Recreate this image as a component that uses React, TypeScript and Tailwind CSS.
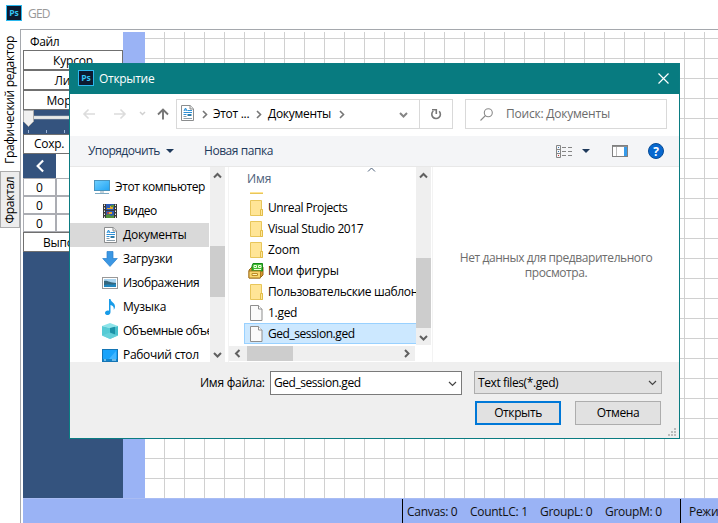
import React from 'react';

type P = { className?: string };

const Ps = ({ className = '' }: P) => (
  <svg viewBox="0 0 16 16" className={`h-4 w-4 shrink-0 ${className}`}>
    <rect x="0.5" y="0.5" width="15" height="15" fill="#0d1a30" stroke="#2bb8ee" />
    <text x="8" y="11" textAnchor="middle" fontSize="8.5" fontWeight="700" fill="#35c4f5" fontFamily="Open Sans, sans-serif">Ps</text>
  </svg>
);

const Chevron = ({ className = '', dir, w = 2 }: P & { dir: 'up' | 'down' | 'left' | 'right'; w?: number }) => {
  const d = { up: 'M1 6.5 4.5 3 8 6.5', down: 'M1 3 4.5 6.5 8 3', left: 'M6.5 1 3 4.5 6.5 8', right: 'M3 1 6.5 4.5 3 8' }[dir];
  return (
    <svg viewBox="0 0 9 9" className={`shrink-0 ${className.includes('h-[') ? '' : 'h-[9px] w-[9px]'} ${className}`} fill="none" stroke="currentColor" strokeWidth={w}>
      <path d={d} />
    </svg>
  );
};

const DocIcon = ({ className = '' }: P) => (
  <svg viewBox="0 0 13 16" className={`h-4 w-[13px] shrink-0 ${className}`}>
    <path d="M.5.5h8.700l3.300 3.300v11.700H.5z" fill="#fff" stroke="#8b8d8e" />
    <path d="M9 .5V4h3.500" fill="#e8e8e8" stroke="#8b8d8e" />
    <path d="m3 6 1.500-3L6 6M3.500 5h2M6.500 5.500H11M2.500 7.500H11M2.500 9.500h3" stroke="#2b8fd6" fill="none" />
    <path d="M6.500 9h4v2h-4z" fill="#2b79a8" />
    <path d="M2.500 11.500h3M2.500 13.500H11" stroke="#8a9ca8" />
  </svg>
);

const PcIcon = () => (
  <svg viewBox="0 0 16 16" className="h-4 w-4 shrink-0">
    <defs><linearGradient id="pc" x2="1" y2="1"><stop stopColor="#6fd0ff" /><stop offset="1" stopColor="#22a4f4" /></linearGradient></defs>
    <rect x=".5" y="1.500" width="15" height="10" fill="url(#pc)" stroke="#4a94bd" />
    <path d="M6 12h4v2H6z" fill="#c5d3db" />
    <path d="M1 14.500h14" stroke="#7eaac3" />
  </svg>
);

const VideoIcon = () => (
  <svg viewBox="0 0 14 16" className="h-4 w-[14px] shrink-0">
    <path d="M0 1h14v14H0z" fill="#393939" />
    <path d="M1.500 1.500v14M12.500 1.500v14" stroke="#eee" strokeDasharray="1.500 1.500" />
    <path d="M3 1h8v6H3zM3 8h8v7H3z" fill="#2c5ab4" />
    <path d="M4 5h3V3h3v3H4zM6 9h3v2H6z" fill="#e4a62b" />
    <path d="M8 2h3v2H8zM3 12l3-1 2 2 3-1v3H3z" fill="#54913b" />
    <path d="M4 9h2v2H4z" fill="#a94457" />
  </svg>
);

const DownIcon = () => (
  <svg viewBox="0 0 16 16" className="h-4 w-4 shrink-0">
    <path d="M5 .5h6v7h4.300L8 15.500.7 7.500H5z" fill="#3b97e3" stroke="#2880cc" strokeWidth=".7" />
  </svg>
);

const ImageIcon = () => (
  <svg viewBox="0 0 16 12" className="h-3 w-4 shrink-0">
    <rect x=".5" y=".5" width="15" height="11" fill="#fff" stroke="#999" />
    <path d="M2 2h12v8H2z" fill="#a9d4f0" />
    <path d="M2 4c3-1 6 2 12 2v4H2z" fill="#35677e" />
    <path d="M2 8c4-1 8 0 12-1v3H2z" fill="#2186bd" />
  </svg>
);

const MusicIcon = () => (
  <svg viewBox="0 0 16 16" className="h-4 w-4 shrink-0">
    <path d="M7 0h1.500c.3 3 4.500 3.500 4.500 7.500 0 1.600-.7 2.700-1.300 3.500.5-3.300-.8-4.300-3.200-5V13c0 4-5.500 3.800-5.500 1 0-2.200 2.300-3 4-2.300z" fill="#189be8" />
  </svg>
);

const CubeIcon = () => (
  <svg viewBox="0 0 16 16" className="h-4 w-4 shrink-0">
    <path d="m0 3 8-3 8 3-8 2z" fill="#8ce4ea" />
    <path d="m0 3 8 2v11l-8-3.500z" fill="#56cbd5" />
    <path d="m16 3-8 2v11l8-3.500z" fill="#45bfcb" />
    <path d="m8 5 5-1.200v8L8 10z" fill="#1b91a7" />
    <path d="m0 12.500 8-3 8 3L8 16z" fill="#70d6df" opacity=".65" />
  </svg>
);

const DesktopIcon = () => (
  <svg viewBox="0 0 16 13" className="h-[13px] w-4 shrink-0">
    <rect x=".5" y=".5" width="15" height="12" fill="#19a3fb" stroke="#1475b5" />
    <path d="m7 10 7-8v8z" fill="#42b6ff" />
    <path d="M1 11h14" stroke="#0d699f" />
    <path d="M2 11h2M10 11h4" stroke="#c7edff" />
  </svg>
);

const FolderIcon = () => (
  <svg viewBox="0 0 13 16" className="ml-px h-4 w-[13px] shrink-0">
    <path d="M.5.5h11v9h1v6H.5z" fill="#ffe596" stroke="#e8c65a" />
    <path d="M10.500 9.500h2v6h-2z" fill="#ffe89e" stroke="#e3bd48" />
  </svg>
);

const FileIcon = () => (
  <svg viewBox="0 0 13 16" className="ml-px h-4 w-[13px] shrink-0">
    <path d="M.5.5h8l3.500 3.500v11.500H.5z" fill="#fafafa" stroke="#8e8e8e" />
    <path d="M8.500.5V4H12" fill="#fff" stroke="#8e8e8e" />
  </svg>
);

const ShapesIcon = () => (
  <svg viewBox="0 0 16 16" className="-ml-px -mr-px h-4 w-4 shrink-0">
    <path d="m1 7 3-3h11v8l-3 3H1z" fill="#d99a2e" stroke="#9a6618" />
    <path d="M5 .5h9.500V8H4V3z" fill="#42bb36" stroke="#148817" />
    <path d="M6 2.500h2.500v2H6zM10.500 2.500H13v2h-2.500zM6 6.500h7" stroke="#efffdc" fill="none" />
    <path d="M1 8h11.500v7H1z" fill="#f9d66c" stroke="#a97820" />
    <path d="M4 10.500h5.500v2H4z" fill="#fff5bb" stroke="#bd8b27" />
  </svg>
);

const tree: { icon: React.ReactNode; label: string; text: string; pad: string; on?: boolean }[] = [
  { icon: <PcIcon />, label: 'Этот компьютер', text: 'ml-[5px] tracking-[-0.4px]', pad: 'pl-6' },
  { icon: <VideoIcon />, label: 'Видео', text: 'ml-[6px] tracking-[-0.5px]', pad: 'pl-[33px]' },
  { icon: <DocIcon />, label: 'Документы', text: 'ml-[6px] tracking-[-0.25px]', pad: 'pl-[34px]', on: true },
  { icon: <DownIcon />, label: 'Загрузки', text: 'ml-[5px] tracking-[-0.3px]', pad: 'pl-8' },
  { icon: <ImageIcon />, label: 'Изображения', text: 'ml-[5px] tracking-[-0.4px]', pad: 'pl-8' },
  { icon: <MusicIcon />, label: 'Музыка', text: 'ml-[5px] tracking-[-0.25px]', pad: 'pl-8' },
  { icon: <CubeIcon />, label: 'Объемные объекты', text: 'ml-[5px] tracking-[-0.5px]', pad: 'pl-8' },
  { icon: <DesktopIcon />, label: 'Рабочий стол', text: 'ml-[5px] tracking-[-0.3px]', pad: 'pl-8' },
];

const files: { icon: React.ReactNode; label: string; text: string; on?: boolean }[] = [
  { icon: <FolderIcon />, label: 'Unreal Projects', text: 'tracking-[-0.4px]' },
  { icon: <FolderIcon />, label: 'Visual Studio 2017', text: 'tracking-[-0.4px]' },
  { icon: <FolderIcon />, label: 'Zoom', text: 'tracking-[-0.2px]' },
  { icon: <ShapesIcon />, label: 'Мои фигуры', text: 'tracking-[-0.2px]' },
  { icon: <FolderIcon />, label: 'Пользовательские шаблоны', text: 'tracking-[-0.37px]' },
  { icon: <FileIcon />, label: '1.ged', text: 'tracking-[-0.3px]' },
  { icon: <FileIcon />, label: 'Ged_session.ged', text: 'tracking-[-0.45px]', on: true },
];

const Editor = () => (
  <div className="flex h-full flex-col">
    <header className="flex h-[29px] shrink-0 items-start pl-[6px] pt-[5px]">
      <Ps />
      <span className="ml-[6px] text-[12px] leading-[17px] tracking-[-0.8px] text-[#999]">GED</span>
    </header>
    <div className="flex min-h-0 flex-1">
      <nav className="flex w-5 shrink-0 flex-col items-center">
        <div className="flex h-[142px] w-5 items-center justify-center">
          <span className="-rotate-90 whitespace-nowrap tracking-[-0.35px]">Графический редактор</span>
        </div>
        <div className="flex h-[57px] w-5 items-center justify-center border border-[#acacac] bg-[#ededed]">
          <span className="-rotate-90 whitespace-nowrap tracking-[-0.3px]">Фрактал</span>
        </div>
      </nav>
      <main className="flex min-w-0 flex-1 flex-col border-l border-t border-[#a5a8ad] pl-[2px] pt-[2px]">
        <div className="flex min-h-0 flex-1">
          <aside className="flex w-[100px] shrink-0 flex-col bg-[#34537e]">
            <div className="h-[18px] bg-white pl-[7px] leading-[20px] tracking-[-0.4px]">Файл</div>
            {['Курсор', 'Линия', 'Морфинг'].map((t) => (
              <div key={t} className="h-5 border border-[#707070] bg-white text-center leading-[19px] tracking-[-0.2px]">{t}</div>
            ))}
            <div className="h-6 shrink-0">
              <svg viewBox="0 0 100 24" className="h-6 w-[100px]">
                <path d="M10 6h86v3H10z" fill="#e7eaea" stroke="#c6c9ca" strokeWidth=".5" />
                <path d="M.5.500h10v11l-5 5-5-5z" fill="#f0f0f0" stroke="#acacac" />
                <path d="M5.500 20v3M23.500 20v3M41.500 20v3M59.500 20v3M77.500 20v3" stroke="#9db5d8" />
              </svg>
            </div>
            <div className="h-5 border border-[#707070] bg-white pl-[10px] leading-[18px] tracking-[-0.3px]">Сохр.</div>
            <div className="flex h-6">
              <div className="flex w-[33px] items-center justify-center text-white"><Chevron dir="left" w={1.4} className="h-[14px] w-[14px]" /></div>
              <div className="flex-1 bg-white" />
            </div>
            {[0, 1, 2].map((i) => (
              <div key={i} className="flex h-[18px] bg-white">
                <div className="w-[33px] border border-[#abadb3] text-center leading-[17px]">0</div>
                <div className="flex-1 border border-[#abadb3]" />
              </div>
            ))}
            <div className="h-5 border border-[#707070] bg-white pl-[19px] leading-[19px] tracking-[-0.2px]">Выполнить</div>
          </aside>
          <div className="w-[22px] shrink-0 bg-[#9ab3f5]" />
          <div className="flex-1 bg-[linear-gradient(to_right,transparent_19px,#d0d0d0_19px),linear-gradient(to_bottom,transparent_19px,#d0d0d0_19px)] bg-[length:20px_20px] bg-[position:0_-13px]" />
        </div>
        <footer className="flex h-[25px] shrink-0 border-t border-[#a9bcf3] bg-[#9ab3f5] leading-[26px] tracking-[-0.3px] text-[#111]">
          <div className="w-[379px]" />
          <div className="flex w-[278px] border-l border-black pl-1">
            <span className="w-[63px]">Canvas: 0</span>
            <span className="w-[70px]">CountLC: 1</span>
            <span className="w-[65px]">GroupL: 0</span>
            <span>GroupM: 0</span>
          </div>
          <div className="flex-1 overflow-hidden whitespace-nowrap border-l border-black pl-2">Режим</div>
        </footer>
      </main>
    </div>
  </div>
);

const VBar = ({ className, thumb }: { className: string; thumb: string }) => (
  <div className={`flex w-[15px] shrink-0 flex-col items-center bg-[#efefef] text-[#606060] ${className}`}>
    <Chevron dir="up" className="mt-1" />
    <div className={`w-full bg-[#cdcdcd] ${thumb}`} />
    <Chevron dir="down" className="mb-[3px] mt-auto" />
  </div>
);

const Dialog = () => (
  <section className="absolute left-[69px] top-[63px] flex h-[376px] w-[611px] flex-col border border-[#0b7c82] bg-white">
    <header className="flex h-[30px] shrink-0 items-center bg-[#087b80] pl-2 pr-[10px] text-white">
      <Ps className="-mt-[3px]" />
      <span className="ml-[5px] tracking-[-0.3px]">Открытие</span>
      <svg viewBox="0 0 11 11" className="-mt-[2px] ml-auto h-[11px] w-[11px]" stroke="white" strokeWidth="1.200"><path d="m.5.500 10 10m0-10-10 10" /></svg>
    </header>
    <div className="flex h-[42px] shrink-0 items-start pt-[5px]">
      <svg viewBox="0 0 106 30" className="h-[30px] w-[106px] shrink-0" fill="none">
        <path d="M25 15H14m4.500-4.500L14 15l4.500 4.500M44 15h11m-4.500-4.500L55 15l-4.500 4.500" stroke="#dcdcdc" strokeWidth="1.600" />
        <path d="m70 13 2.500 2.500L75 13" stroke="#d0d0d0" strokeWidth="1.500" />
        <path d="M93 20.500V11m-5 4.500 5-5 5 5" stroke="#767676" strokeWidth="1.900" />
      </svg>
      <div className="flex h-[30px] w-[277px] shrink-0 items-center border border-[#d9d9d9]">
        <DocIcon className="-mt-[2px] ml-1" />
        <Chevron dir="right" className="ml-[6px] text-[#767676]" w={1.6} />
        <span className="ml-[4px] w-[38px] whitespace-nowrap tracking-[-0.3px]">Этот ...</span>
        <Chevron dir="right" className="ml-[3px] text-[#767676]" w={1.6} />
        <span className="ml-[5px] w-[64px] tracking-[-0.3px]">Документы</span>
        <Chevron dir="right" className="ml-[5px] text-[#767676]" w={1.6} />
        <Chevron dir="down" className="ml-auto mr-[11px] text-[#858585]" w={2} />
        <div className="flex h-full w-[33px] items-center justify-center border-l border-[#d9d9d9]">
          <svg viewBox="0 0 12 12" className="h-3 w-3" fill="none" stroke="#777" strokeWidth="1.600"><path d="M3.300 3a4.300 4.300 0 1 0 5.900.3" /><path d="M2 1.700h4.300V6" /></svg>
        </div>
      </div>
      <div className="ml-3 flex h-[30px] w-[202px] items-center border border-[#d9d9d9] text-[#6b6b6b]">
        <svg viewBox="0 0 13 13" className="ml-[14px] h-[13px] w-[13px]" fill="none" stroke="#8a8a8a" strokeWidth="1.100"><circle cx="8.300" cy="4.700" r="4" /><path d="M5.500 7.500.5 12.500" /></svg>
        <span className="ml-[13px] tracking-[-0.22px]">Поиск: Документы</span>
      </div>
    </div>
    <div className="flex h-[31px] shrink-0 items-center border-b border-[#e8e8e8] bg-[#f4f5f7] pl-[18px] pr-[15px] text-[#1e395b]">
      <span className="w-[74px] tracking-[-0.55px]">Упорядочить</span>
      <svg viewBox="0 0 8 4" className="ml-[4px] h-1 w-2"><path d="M0 0h8L4 4z" fill="#1e395b" /></svg>
      <span className="ml-[30px] tracking-[-0.45px]">Новая папка</span>
      <svg viewBox="0 0 16 13" className="ml-auto h-[13px] w-4" fill="none">
        <path d="M.5.500h4v12h-4zM.5 4.500h4m-4 4h4M6 2.500h4m2 0h4M6 6.500h4m2 0h4M6 10.500h4m2 0h4" stroke="#858585" />
        <path d="M2 2h1v1H2zM2 6h1v1H2z" fill="#3878b5" /><path d="M2 10h1v1H2z" fill="#c33" />
      </svg>
      <svg viewBox="0 0 8 4" className="ml-[10px] h-1 w-2"><path d="M0 0h8L4 4z" fill="#1e395b" /></svg>
      <svg viewBox="0 0 16 12" className="ml-[22px] h-3 w-4"><rect x=".5" y=".5" width="15" height="11" fill="#fff" stroke="#808080" /><path d="M1 1h14v1H1z" fill="#909090" /><path d="M4.500 2v9" stroke="#bbb" /><path d="M12 2h3v9h-3z" fill="#379bea" /></svg>
      <svg viewBox="0 0 16 16" className="ml-5 h-4 w-4"><circle cx="8" cy="8" r="7.500" fill="#0768cf" stroke="#074b95" /><text x="8" y="12.500" textAnchor="middle" fontSize="12" fontWeight="700" fill="white" fontFamily="Open Sans, sans-serif">?</text></svg>
    </div>
    <div className="flex h-[195px] shrink-0">
      <div className="w-[139px] shrink-0 overflow-hidden pt-2">
        {tree.map((r) => (
          <div key={r.label} className={`flex h-6 items-center whitespace-nowrap ${r.pad} ${r.on ? 'bg-[#d9d9d9]' : ''}`}>
            {r.icon}
            <span className={r.text}>{r.label}</span>
          </div>
        ))}
      </div>
      <VBar className="ml-px" thumb="mt-[66px] h-[51px]" />
      <div className="ml-[3px] flex w-[204px] shrink-0 flex-col border-l border-[#f3f3f3]">
        <div className="flex h-[178px]">
          <div className="w-[187px] shrink-0 overflow-hidden pl-[15px]">
            <div className="flex h-[25px] items-start text-[#4c607a]">
              <span className="ml-[3px] mt-1 w-[120px] tracking-[-0.1px]">Имя</span>
              <Chevron dir="up" w={1} className="-mt-[2px]" />
            </div>
            <div className="ml-[6px] h-[2px] w-[13px] border-b border-[#e8c65a] bg-[#ffe596]" />
            <div className="pt-[3px]">
              {files.map((f) => (
                <div key={f.label} className={`flex h-[21px] items-center whitespace-nowrap ${f.on ? 'border border-r-0 border-[#99d1ff] bg-[#cce8ff] pl-1' : 'pl-[5px]'}`}>
                  {f.icon}
                  <span className={`ml-[5px] ${f.text}`}>{f.label}</span>
                </div>
              ))}
            </div>
          </div>
          <VBar className="" thumb="mt-[78px] h-[70px]" />
        </div>
        <div className="mt-px flex h-[15px] w-[186px] items-center bg-[#efefef] text-[#606060]">
          <Chevron dir="left" className="ml-1" />
          <div className="ml-[5px] h-full w-[46px] bg-[#cdcdcd]" />
          <Chevron dir="right" className="ml-auto mr-1" />
        </div>
      </div>
      <div className="flex flex-1 items-center justify-center border-l border-[#f3f3f3] text-center leading-[15px] tracking-[-0.43px] text-[#6d6d6d]">
        <p>Нет данных для предварительного<br />просмотра.</p>
      </div>
    </div>
    <div className="relative flex-1 bg-[#efefef]">
      <div className="flex pt-[9px]">
        <span className="ml-[130px] w-[70px] leading-[23px] tracking-[-0.25px]">Имя файла:</span>
        <div className="flex h-6 w-48 items-center border border-[#7a7a7a] bg-white pl-[3px] pr-1"><span className="tracking-[-0.45px]">Ged_session.ged</span><Chevron dir="down" w={1.2} className="ml-auto text-[#444]" /></div>
        <div className="ml-3 flex h-[23px] w-[188px] items-center border border-[#adadad] bg-[#e1e1e1] pl-[3px] pr-1"><span className="tracking-[-0.4px]">Text files(*.ged)</span><Chevron dir="down" w={1.2} className="ml-auto text-[#444]" /></div>
      </div>
      <div className="ml-[405px] mt-[6px] flex gap-[14px] text-center">
        <div className="h-6 w-[86px] border-2 border-[#0078d7] bg-[#e1e1e1] leading-[19px] tracking-[-0.4px]">Открыть</div>
        <div className="h-6 w-[86px] border border-[#adadad] bg-[#e1e1e1] leading-[21px] tracking-[-0.4px]">Отмена</div>
      </div>
      <svg viewBox="0 0 8 8" className="absolute bottom-[2px] right-[3px] h-2 w-2" fill="#bcbcbc"><path d="M6 0h2v2H6zM3 3h2v2H3zM6 3h2v2H6zM0 6h2v2H0zM3 6h2v2H3zM6 6h2v2H6z" /></svg>
    </div>
  </section>
);

export default function App() {
  return (
    <div className="relative h-[523px] w-[718px] overflow-hidden bg-white font-['Open_Sans','Noto_Sans',sans-serif] text-[12px] leading-4 text-black">
      <Editor />
      <Dialog />
    </div>
  );
}
